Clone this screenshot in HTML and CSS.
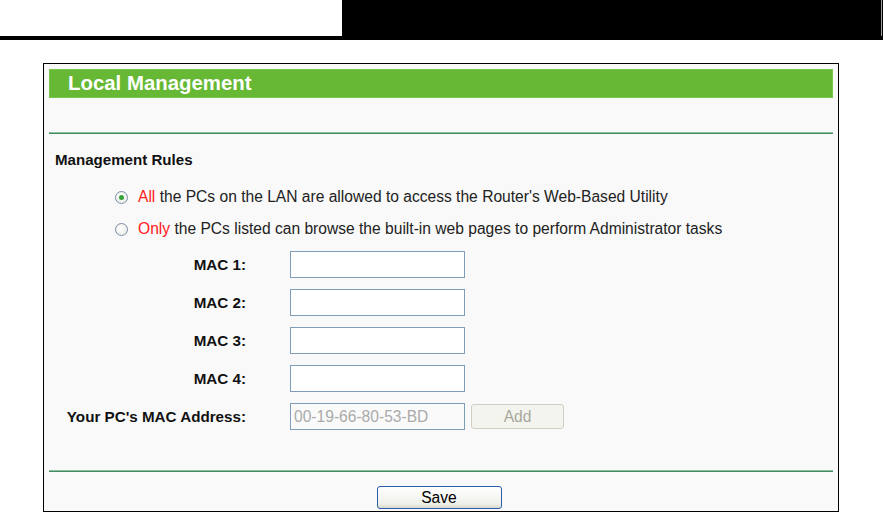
FILE: index.html
```html
<!DOCTYPE html>
<html>
<head>
<meta charset="utf-8">
<link rel="stylesheet" href="styles.css">
</head>
<body>
<div class="topbar">
  <div class="top-left"></div>
  <div class="top-right"></div>
</div>
<div class="frame">
  <div class="titlebar">Local Management</div>
  <div class="rule rule-top"></div>
  <div class="section-title">Management Rules</div>
  <div class="options">
    <div class="opt"><span class="radio checked"></span><span class="red">All</span>&nbsp;the PCs on the LAN are allowed to access the Router's Web-Based Utility</div>
    <div class="opt"><span class="radio"></span><span class="red">Only</span>&nbsp;the PCs listed can browse the built-in web pages to perform Administrator tasks</div>
  </div>
  <div class="macs">
    <div class="label">MAC 1:</div><div class="field"><span class="input"></span></div>
    <div class="label">MAC 2:</div><div class="field"><span class="input"></span></div>
    <div class="label">MAC 3:</div><div class="field"><span class="input"></span></div>
    <div class="label">MAC 4:</div><div class="field"><span class="input"></span></div>
    <div class="label label-wide">Your PC's MAC Address:</div><div class="field"><span class="input disabled">00-19-66-80-53-BD</span><span class="btn-add">Add</span></div>
  </div>
  <div class="rule rule-bottom"></div>
  <div class="save-row"><span class="btn-save">Save</span></div>
</div>
</body>
</html>
```
FILE: styles.css
```css
html, body {
  margin: 0;
  padding: 0;
  background: #ffffff;
  font-family: "Liberation Sans", Arial, sans-serif;
}
.topbar {
  display: flex;
  height: 36px;
  border-bottom: 4px solid #000;
}
.top-left {
  width: 342px;
  background: #fff;
}
.top-right {
  flex: 1;
  background: #000;
  box-shadow: inset -1px 0 0 #000, inset -2px 0 0 #9a9a9a;
}
.frame {
  margin: 23px 0 0 43px;
  width: 784px;
  height: 442px;
  border: 1px solid #000;
  background: #f9f9f9;
  padding: 5px 5px 0 5px;
}
.titlebar {
  height: 29px;
  background: #66b835;
  border: 1px solid #79c64c;
  box-sizing: border-box;
  color: #fff;
  font-weight: bold;
  font-size: 20.4px;
  line-height: 26px;
  padding-left: 18px;
}
.rule {
  height: 2px;
  background: #3f8a5f;
  border-top: 1px solid #8fbfa3;
  box-sizing: border-box;
}
.rule-top {
  margin-top: 34px;
}
.section-title {
  margin-top: 16px;
  padding-left: 6px;
  font-weight: bold;
  font-size: 15.1px;
  line-height: 20px;
  color: #111;
}
.options {
  margin-top: 11px;
  padding-left: 66px;
}
.opt {
  display: flex;
  align-items: center;
  height: 32px;
  font-size: 15.6px;
  color: #222;
}
.red {
  color: #ff2020;
}
.radio {
  width: 11px;
  height: 11px;
  border-radius: 50%;
  border: 1px solid #7b8ea6;
  background: radial-gradient(circle at 40% 40%, #ffffff 0%, #e6e6e0 100%);
  margin-right: 10px;
  position: relative;
  flex: none;
}
.radio.checked::after {
  content: "";
  position: absolute;
  left: 3px;
  top: 3px;
  width: 5px;
  height: 5px;
  border-radius: 50%;
  background: #35a035;
}
.macs {
  margin-top: 6px;
  display: grid;
  grid-template-columns: 197px 1fr;
  column-gap: 44px;
  row-gap: 11px;
}
.label {
  text-align: right;
  font-weight: bold;
  font-size: 15.2px;
  color: #111;
  height: 27px;
  line-height: 27px;
}
.field {
  display: flex;
  align-items: center;
  gap: 6px;
}
.input {
  display: block;
  width: 175px;
  height: 27px;
  box-sizing: border-box;
  border: 1px solid #7f9db9;
  background: #fff;
  font-size: 15.6px;
  line-height: 25px;
  padding-left: 3px;
  color: #aaa;
}
.input.disabled {
  background: #fafafa;
}
.btn-add {
  display: block;
  width: 93px;
  height: 25px;
  box-sizing: border-box;
  border: 1px solid #cfcfc6;
  border-radius: 3px;
  background: #f4f4ee;
  color: #a8a89e;
  font-size: 15.6px;
  line-height: 23px;
  text-align: center;
}
.rule-bottom {
  margin-top: 40px;
}
.save-row {
  display: flex;
  justify-content: center;
  margin-top: 14px;
  padding-right: 4px;
}
.btn-save {
  display: block;
  width: 125px;
  height: 23px;
  box-sizing: border-box;
  border: 1px solid #2a5ca8;
  border-radius: 3px;
  background: linear-gradient(#ffffff, #f0f0ea 80%, #d8d8d0);
  font-size: 15.6px;
  line-height: 21px;
  text-align: center;
  color: #000;
}
```
